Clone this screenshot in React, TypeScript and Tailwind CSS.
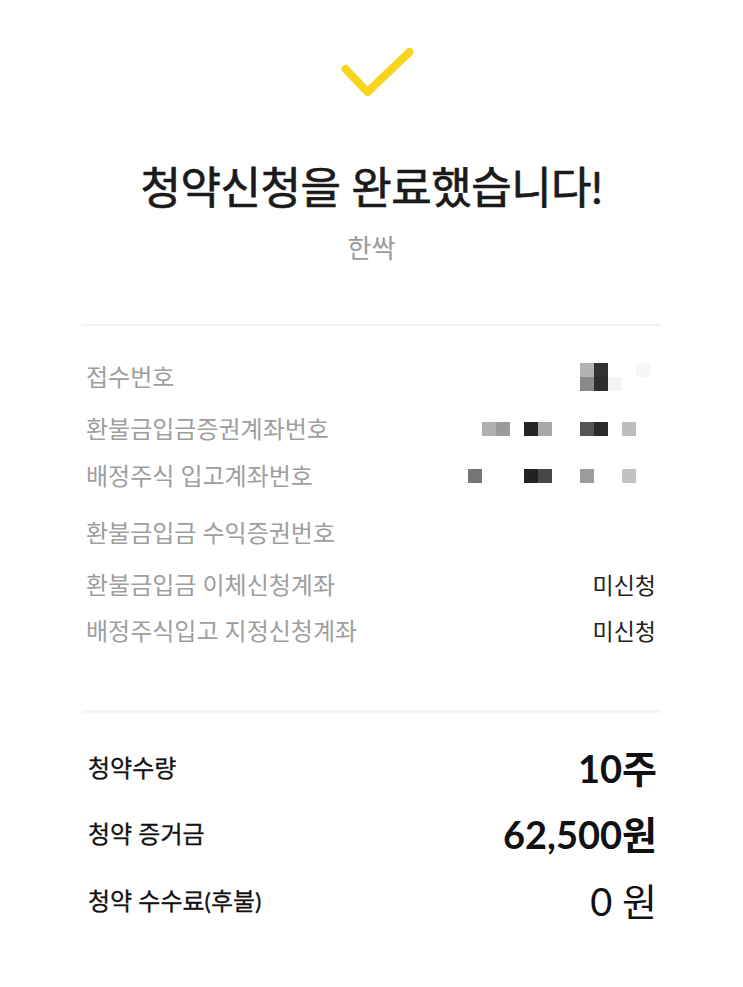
const font = { fontFamily: "Lato, 'Noto Sans CJK KR', sans-serif" };

type Cell = string | null;

// blurred account numbers, 14px cells
const mosaics: Cell[][][] = [
  [
    ["#b3b3b3", "#333333", null, null, "#f6f6f6"],
    ["#8a8a8a", "#2e2e2e", "#f4f4f4", null, null],
  ],
  [["#b0b0b0", "#9a9a9a", null, "#242424", "#a8a8a8", null, null, "#555555", "#2a2a2a", null, "#bdbdbd"]],
  [["#767676", null, null, null, "#222222", "#464646", null, null, "#9c9c9c", null, null, "#c2c2c2"]],
];

const infoRows = [
  { label: "접수번호", mt: "mt-[36px]", mosaic: 0, mr: "mr-[11px]" },
  { label: "환불금입금증권계좌번호", mt: "mt-[22px]", mosaic: 1, mr: "mr-[25px]" },
  { label: "배정주식 입고계좌번호", mt: "mt-[17px]", mosaic: 2, mr: "mr-[25px]" },
  { label: "환불금입금 수익증권번호", mt: "mt-[27px]" },
  { label: "환불금입금 이체신청계좌", mt: "mt-[22px]", value: "미신청" },
  { label: "배정주식입고 지정신청계좌", mt: "mt-[16px]", value: "미신청" },
];

const totals = [
  { label: "청약수량", value: "10주", bold: true, mt: "mt-[31px]" },
  { label: "청약 증거금", value: "62,500원", bold: true, mt: "mt-[18px]" },
  { label: "청약 수수료(후불)", value: "0 원", bold: false, mt: "mt-[19px]" },
];

function Mosaic({ rows }: { rows: Cell[][] }) {
  return (
    <div className="flex flex-col">
      {rows.map((row, i) => (
        <div key={i} className="flex">
          {row.map((c, j) => (
            <div key={j} className="w-[14px] h-[14px]" style={{ backgroundColor: c ?? "transparent" }} />
          ))}
        </div>
      ))}
    </div>
  );
}

export default function App() {
  return (
    <div className="w-[743px] h-[987px] bg-white overflow-hidden" style={font}>
      <div className="flex flex-col items-center pt-[40px]">
        <svg width="90" height="60" viewBox="0 0 90 60" fill="none">
          <path d="M18.5 29 L40.5 52 L82.5 12" stroke="#f7d51d" strokeWidth="8" strokeLinecap="round" strokeLinejoin="round" />
        </svg>
        <h1 className="mt-[63px] text-[44px] leading-[48px] font-normal text-[#1a1a1a] tracking-[-0.5px] [-webkit-text-stroke:0.7px_#1a1a1a]">
          청약신청을 완료했습니다!
        </h1>
        <p className="mt-[22px] text-[26px] leading-[30px] text-[#9a9a9a]">한싹</p>
      </div>

      <div className="px-[82px]">
        <div className="mt-[61px] h-[2px] bg-[#f2f2f2]" />

        {infoRows.map((r) => (
          <div key={r.label} className={`flex items-center justify-between h-[30px] ${r.mt}`}>
            <span className="pl-[4px] text-[24px] text-[#9e9e9e]">{r.label}</span>
            {r.mosaic !== undefined && (
              <div className={r.mr}>
                <Mosaic rows={mosaics[r.mosaic]} />
              </div>
            )}
            {r.value && <span className="pr-[5px] text-[23px] text-[#222222]">{r.value}</span>}
          </div>
        ))}

        <div className="mt-[64px] h-[3px] bg-[#f5f5f5]" />

        {totals.map((t) => (
          <div key={t.label} className={`flex items-center justify-between h-[48px] ${t.mt}`}>
            <span className="pl-[6px] text-[24px] font-normal text-[#111111] [-webkit-text-stroke:0.3px_#111111]">
              {t.label}
            </span>
            <span className={`pr-[4px] text-[38px] text-[#111111] ${t.bold ? "font-bold" : "font-normal"}`}>
              {t.value}
            </span>
          </div>
        ))}
      </div>
    </div>
  );
}
